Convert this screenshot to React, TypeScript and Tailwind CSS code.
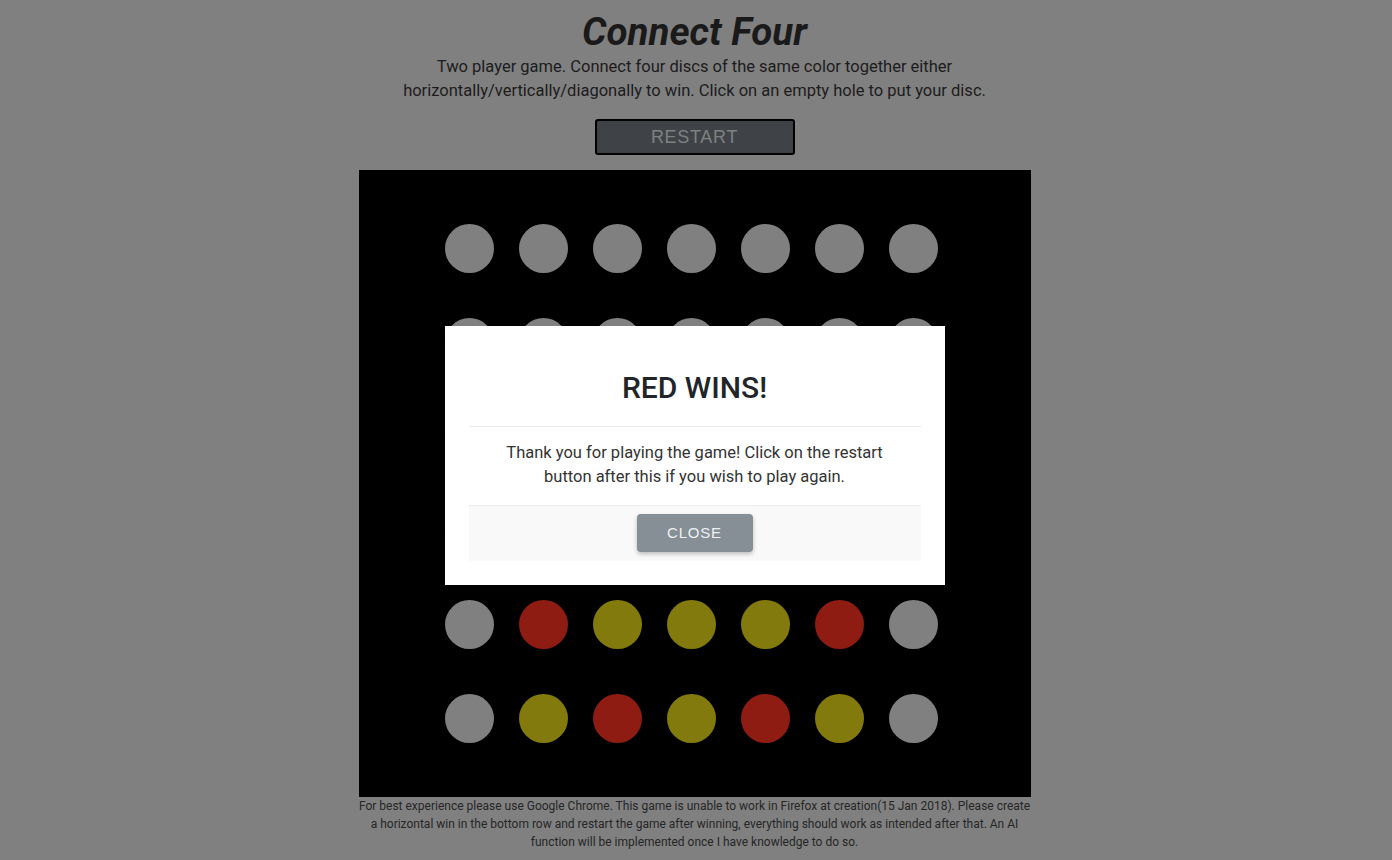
const board: string[][] = [
  ["e", "e", "e", "e", "e", "e", "e"],
  ["e", "e", "e", "e", "e", "e", "e"],
  ["e", "e", "e", "e", "e", "e", "e"],
  ["e", "e", "e", "e", "e", "e", "e"],
  ["e", "r", "y", "y", "y", "r", "e"],
  ["e", "y", "r", "y", "r", "y", "e"],
];

function Disc({ c }: { c: string }) {
  if (c === "r") return <div className="w-[49px] h-[49px] rounded-full bg-[#8e1c12]" />;
  if (c === "y") return <div className="w-[49px] h-[49px] rounded-full bg-[#827a0c]" />;
  return <div className="w-[49px] h-[49px] rounded-full bg-[#808080]" />;
}

export default function App() {
  return (
    <main className="min-h-screen bg-[#808080] flex flex-col items-center pr-[3px] font-['Roboto',sans-serif] text-[#1c1c1c]">
      <h1 className="mt-[11px] text-[38.5px] leading-[42px] font-bold italic text-[#1a1a1a]">Connect Four</h1>
      <p className="mt-[2px] text-[16.5px] leading-[24px] text-center">
        Two player game. Connect four discs of the same color together either
        <br />
        horizontally/vertically/diagonally to win. Click on an empty hole to put your disc.
      </p>
      <button className="mt-[16px] w-[200px] h-[36px] rounded-[3px] border-2 border-black bg-[#3f4347] text-[#808080] text-[18px] tracking-[0.7px] font-['Liberation_Sans',sans-serif]">
        RESTART
      </button>
      <div className="mt-[15px] w-[672px] h-[627px] bg-black pl-[74px] pt-[31px]">
        <div className="grid grid-cols-[repeat(7,74px)] auto-rows-[94px]">
          {board.flat().map((c, i) => (
            <div key={i} className="flex items-center justify-center">
              <Disc c={c} />
            </div>
          ))}
        </div>
      </div>
      <p className="w-[672px] text-center text-[12px] leading-[18px] text-[#262626] whitespace-nowrap">
        For best experience please use Google Chrome. This game is unable to work in Firefox at creation(15 Jan 2018). Please create
        <br />
        a horizontal win in the bottom row and restart the game after winning, everything should work as intended after that. An AI
        <br />
        function will be implemented once I have knowledge to do so.
      </p>

      <div className="fixed inset-0 flex justify-center pt-[326px] pr-[3px]">
        <div className="w-[500px] h-[259px] bg-white px-6 pb-6 pt-[44px] flex flex-col">
          <h2 className="text-[30px] leading-[36px] font-medium text-center text-[#212529]">RED WINS!</h2>
          <div className="mt-[20px] border-t border-[#e9ecef] pt-[14px] pb-[16px] text-center text-[16.5px] leading-[24px] text-[#333]">
            Thank you for playing the game! Click on the restart
            <br />
            button after this if you wish to play again.
          </div>
          <div className="border-t border-[#e9ecef] bg-[#f9f9f9] flex-1 flex justify-center pt-[8px]">
            <button className="w-[116px] h-[38px] rounded-[4px] bg-[#868e96] text-[#eef1f3] text-[15px] tracking-[0.8px] font-['Liberation_Sans',sans-serif] shadow-[0_2px_4px_rgba(0,0,0,0.25)]">
              CLOSE
            </button>
          </div>
        </div>
      </div>
    </main>
  );
}
